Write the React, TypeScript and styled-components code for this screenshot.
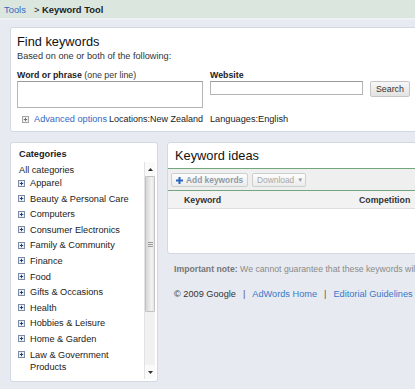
import React from 'react';
import styled, { createGlobalStyle } from 'styled-components';

const GlobalStyle = createGlobalStyle`
  body {
    margin: 0;
    background: #e7eaf0;
  }
`;

const Page = styled.div`
  width: 415px;
  height: 389px;
  overflow: hidden;
  background: #e7eaf0;
  font-family: 'Liberation Sans', Arial, sans-serif;
  font-size: 9.2px;
  color: #222;
`;

const TopBar = styled.div`
  height: 18px;
  display: flex;
  align-items: center;
  padding-left: 4px;
  background: #dbe6de;
  border-bottom: 2px solid #eef1f4;
  font-size: 9.4px;
  white-space: nowrap;
`;

const Link = styled.a`
  color: #3468c4;
  text-decoration: none;
`;

const Crumb = styled.span`
  margin-left: 8px;
  color: #222;
`;

const Bold = styled.b`
  font-weight: bold;
`;

const Content = styled.div`
  width: 520px;
  padding: 7px 0 0 10px;
`;

const Panel = styled.div`
  background: #fff;
  border: 1px solid #d3d9e2;
  border-radius: 3px;
`;

const FindPanel = styled(Panel)`
  padding: 6px 7px 6px 6px;
`;

const Title = styled.div`
  font-size: 12.8px;
  line-height: 16px;
  color: #111;
`;

const SubTitle = styled.div`
  line-height: 12px;
  color: #333;
`;

const FieldGrid = styled.div`
  display: grid;
  grid-template-columns: 193px auto;
  margin-top: 8px;
  align-items: start;
`;

const FieldLabel = styled.div`
  line-height: 11px;
  font-size: 8.8px;
  color: #222;
`;

const Light = styled.span`
  font-weight: normal;
  color: #333;
`;

const TextBox = styled.div`
  width: 186px;
  height: 27px;
  box-sizing: border-box;
  border: 1px solid #b4b4b4;
  border-top-color: #9a9a9a;
  background: #fff;
`;

const InputRow = styled.div`
  display: flex;
  align-items: flex-start;
  gap: 7px;
`;

const Input = styled.div`
  width: 153px;
  height: 14px;
  box-sizing: border-box;
  border: 1px solid #b4b4b4;
  border-top-color: #9a9a9a;
  background: #fff;
`;

const Button = styled.div`
  height: 16px;
  box-sizing: border-box;
  padding: 0 5px;
  border: 1px solid #c6c6c6;
  border-radius: 2px;
  background: linear-gradient(#f7f7f7, #e2e2e2);
  display: flex;
  align-items: center;
  color: #333;
  font-size: 8.8px;
`;

const OptionsGrid = styled.div`
  display: grid;
  grid-template-columns: 193px auto;
  margin-top: 5px;
  line-height: 12px;
  white-space: nowrap;
`;

const Options = styled.div`
  display: flex;
  align-items: center;
  padding-left: 5px;
`;

const Locations = styled.span`
  margin-left: 2px;
  font-size: 9px;
`;

const MainRow = styled.div`
  display: flex;
  align-items: flex-start;
  gap: 9px;
  margin-top: 10px;
`;

const CategoriesPanel = styled(Panel)`
  flex: none;
  width: 148px;
  height: 240px;
  box-sizing: border-box;
  padding: 5px 1px 0 7px;
`;

const PanelHeading = styled.div`
  font-weight: bold;
  line-height: 12px;
  padding-left: 1px;
  color: #222;
`;

const ListBox = styled.div`
  display: flex;
  margin-top: 2px;
  height: 217px;
`;

const List = styled.div`
  flex: 1;
  min-width: 0;
  padding-top: 2px;
  overflow: hidden;
`;

const AllRow = styled.div`
  line-height: 12px;
  padding-left: 1px;
  margin-bottom: 1px;
`;

const CatRow = styled.div<{ $first?: boolean }>`
  display: flex;
  align-items: flex-start;
  line-height: 12px;
  margin-top: ${(p) => (p.$first ? 0 : 3.6)}px;
  padding-right: 4px;
  color: #222;
`;

const IconSlot = styled.span`
  display: flex;
  width: 7px;
  height: 12px;
  align-items: center;
  margin-right: 5px;
  flex: none;
`;

const ScrollBar = styled.div`
  flex: none;
  width: 11px;
  margin-right: 1px;
  display: flex;
  flex-direction: column;
  background: #f0f0f0;
  border-left: 1px solid #e2e2e2;
  box-sizing: border-box;
`;

const Arrow = styled.div<{ $h: number }>`
  height: ${(p) => p.$h}px;
  display: flex;
  align-items: center;
  justify-content: center;
  background: #fafafa;
`;

const Thumb = styled.div`
  height: 136px;
  box-sizing: border-box;
  border: 1px solid #c2c2c2;
  border-radius: 1px;
  background: linear-gradient(90deg, #d6d6d6, #f3f3f3 70%, #e6e6e6);
  display: flex;
  align-items: center;
  justify-content: center;
`;

const Track = styled.div`
  flex: 1;
  background: #f1f1f1;
`;

const IdeasColumn = styled.div`
  flex: 1;
  min-width: 0;
`;

const IdeasPanel = styled(Panel)`
  height: 112px;
  box-sizing: border-box;
  padding-top: 5px;
  overflow: hidden;
`;

const IdeasTitle = styled(Title)`
  padding-left: 7px;
  margin-bottom: 4px;
`;

const Toolbar = styled.div`
  display: flex;
  gap: 4px;
  height: 23px;
  padding-left: 3px;
  padding-top: 4px;
  box-sizing: border-box;
  border-top: 1px solid #73a67e;
  border-bottom: 1px solid #73a67e;
  background: #efefef;
`;

const ToolButton = styled.div<{ $w: number; $strong?: boolean }>`
  width: ${(p) => p.$w}px;
  height: 14px;
  box-sizing: border-box;
  border: 1px solid #cfcfcf;
  border-radius: 2px;
  background: linear-gradient(#fdfdfd, #ececec);
  display: flex;
  align-items: center;
  gap: 3px;
  padding-left: 4px;
  font-size: 8.4px;
  font-weight: ${(p) => (p.$strong ? 'bold' : 'normal')};
  color: ${(p) => (p.$strong ? '#8e9aa7' : '#a8a8a8')};
  white-space: nowrap;
`;

const Caret = styled.span`
  font-size: 6px;
  color: #999;
`;

const HeaderRow = styled.div`
  display: grid;
  grid-template-columns: 175px auto;
  height: 18px;
  box-sizing: border-box;
  padding-left: 16px;
  align-items: center;
  background: #f2f2f2;
  border-bottom: 1px solid #dedede;
  font-weight: bold;
  font-size: 8.8px;
  color: #333;
  white-space: nowrap;
`;

const Note = styled.div`
  margin-top: 10px;
  padding-left: 7px;
  font-size: 8.7px;
  line-height: 11px;
  color: #8a8a8a;
  white-space: nowrap;
`;

const NoteLead = styled.b`
  color: #777;
`;

const Footer = styled.div`
  margin-top: 13px;
  padding-left: 7px;
  line-height: 12px;
  color: #333;
  white-space: nowrap;
`;

const Sep = styled.span`
  margin: 0 7px;
  color: #555;
`;

const FooterLink = styled(Link)`
  color: #3a78c8;
`;

const PlusBox = ({ light }: { light?: boolean }) => (
  <svg width="7" height="7" viewBox="0 0 7 7">
    <rect x="0.5" y="0.5" width="6" height="6" fill={light ? '#f2f2f2' : '#eef1f7'} stroke={light ? '#a4a4a4' : '#7d8ca3'} />
    <path d="M1.8 3.5h3.4M3.5 1.8v3.4" stroke={light ? '#707070' : '#22407a'} strokeWidth="1" />
  </svg>
);

const categories = [
  'Apparel',
  'Beauty & Personal Care',
  'Computers',
  'Consumer Electronics',
  'Family & Community',
  'Finance',
  'Food',
  'Gifts & Occasions',
  'Health',
  'Hobbies & Leisure',
  'Home & Garden',
  'Law & Government Products',
];

export default function App() {
  return (
    <Page>
      <GlobalStyle />
      <TopBar>
        <Link>Tools</Link>
        <Crumb>
          &gt; <Bold>Keyword Tool</Bold>
        </Crumb>
      </TopBar>
      <Content>
        <FindPanel>
          <Title>Find keywords</Title>
          <SubTitle>Based on one or both of the following:</SubTitle>
          <FieldGrid>
            <div>
              <FieldLabel>
                <Bold>Word or phrase</Bold> <Light>(one per line)</Light>
              </FieldLabel>
              <TextBox />
            </div>
            <div>
              <FieldLabel>
                <Bold>Website</Bold>
              </FieldLabel>
              <InputRow>
                <Input />
                <Button>Search</Button>
              </InputRow>
            </div>
          </FieldGrid>
          <OptionsGrid>
            <Options>
              <IconSlot>
                <PlusBox light />
              </IconSlot>
              <Link>Advanced options</Link>
              <Locations>Locations:New Zealand</Locations>
            </Options>
            <span>Languages:English</span>
          </OptionsGrid>
        </FindPanel>

        <MainRow>
          <CategoriesPanel>
            <PanelHeading>Categories</PanelHeading>
            <ListBox>
              <List>
                <AllRow>All categories</AllRow>
                {categories.map((c, i) => (
                  <CatRow key={c} $first={i === 0}>
                    <IconSlot>
                      <PlusBox />
                    </IconSlot>
                    <span>{c}</span>
                  </CatRow>
                ))}
              </List>
              <ScrollBar>
                <Arrow $h={14}>
                  <svg width="5" height="3" viewBox="0 0 5 3">
                    <path d="M0 3L2.5 0L5 3Z" fill="#333" />
                  </svg>
                </Arrow>
                <Thumb>
                  <svg width="5" height="5" viewBox="0 0 5 5">
                    <path d="M0 0.5h5M0 2.5h5M0 4.5h5" stroke="#9a9a9a" strokeWidth="1" />
                  </svg>
                </Thumb>
                <Track />
                <Arrow $h={14}>
                  <svg width="5" height="3" viewBox="0 0 5 3">
                    <path d="M0 0L2.5 3L5 0Z" fill="#333" />
                  </svg>
                </Arrow>
              </ScrollBar>
            </ListBox>
          </CategoriesPanel>

          <IdeasColumn>
            <IdeasPanel>
              <IdeasTitle>Keyword ideas</IdeasTitle>
              <Toolbar>
                <ToolButton $w={77} $strong>
                  <svg width="7" height="7" viewBox="0 0 7 7">
                    <path d="M3.5 0v7M0 3.5h7" stroke="#2a66c0" strokeWidth="2" />
                  </svg>
                  Add keywords
                </ToolButton>
                <ToolButton $w={54}>
                  Download <Caret>▼</Caret>
                </ToolButton>
              </Toolbar>
              <HeaderRow>
                <span>Keyword</span>
                <span>Competition</span>
              </HeaderRow>
            </IdeasPanel>
            <Note>
              <NoteLead>Important note:</NoteLead> We cannot guarantee that these keywords wil
            </Note>
            <Footer>
              © 2009 Google<Sep>|</Sep>
              <FooterLink>AdWords Home</FooterLink>
              <Sep>|</Sep>
              <FooterLink>Editorial Guidelines</FooterLink>
            </Footer>
          </IdeasColumn>
        </MainRow>
      </Content>
    </Page>
  );
}
